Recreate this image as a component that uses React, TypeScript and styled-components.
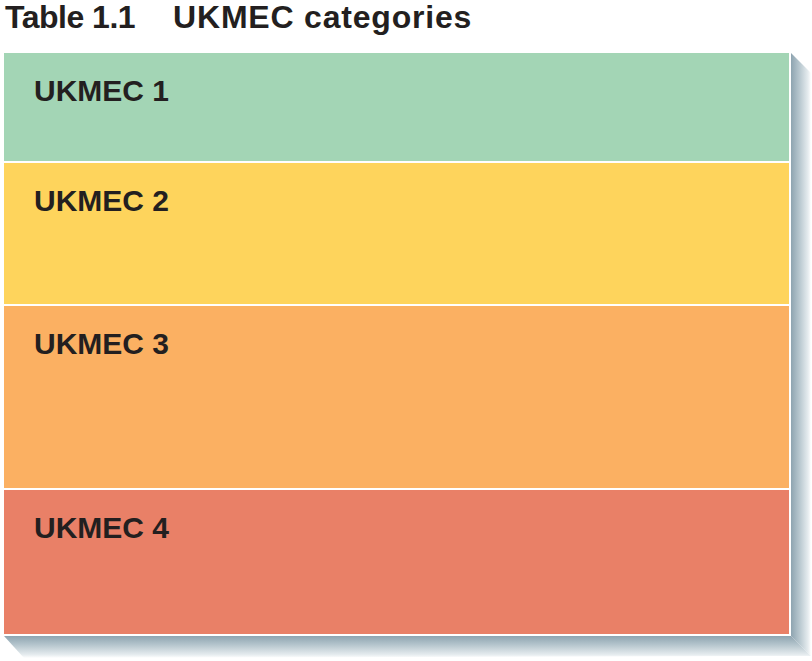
import React from "react";
import styled, { createGlobalStyle } from "styled-components";

const Global = createGlobalStyle`
  html, body { margin: 0; padding: 0; background: #ffffff; }
  body { font-family: "Liberation Sans", Arial, Helvetica, sans-serif; color: #231f20; }
`;

const Page = styled.div`
  width: 812px;
  height: 661px;
  padding: 1px 0 0 5px;
  box-sizing: border-box;
  display: flex;
  flex-direction: column;
  overflow: hidden;
`;

const Title = styled.h1`
  margin: 0;
  font-size: 32px;
  line-height: 32px;
  font-weight: 700;
  display: flex;
  gap: 38px;
  color: #231f20;
`;

const TitlePart = styled.span<{ $ls: number }>`
  letter-spacing: ${(p) => p.$ls}px;
`;

const TableWrap = styled.div`
  position: relative;
  margin: 20px 0 0 -1px;
  width: 785px;
  padding: 0 2px 2px 0;
  background: #ffffff;
  display: flex;
  flex-direction: column;
  gap: 2px;

  &::before,
  &::after {
    content: "";
    position: absolute;
  }
  /* right extrusion */
  &::after {
    top: 0;
    left: 100%;
    width: 20px;
    height: calc(100% + 22px);
    background: linear-gradient(to right, #8ea4b0 0%, #b5c5cd 40%, #e6ecef 85%, #ffffff 100%);
    clip-path: polygon(0 0, 100% 20px, 100% calc(100% - 2px), 0 calc(100% - 22px));
  }
  /* bottom extrusion */
  &::before {
    top: 100%;
    left: 0;
    width: calc(100% + 20px);
    height: 22px;
    background: linear-gradient(to bottom, #8ea4b0 0%, #b5c5cd 40%, #e6ecef 85%, #ffffff 100%);
    clip-path: polygon(0 0, calc(100% - 20px) 0, 100% 20px, 20px 22px);
  }
`;

const Row = styled.div<{ $bg: string; $h: number }>`
  background: ${(p) => p.$bg};
  height: ${(p) => p.$h}px;
  padding: 23px 0 0 30px;
  box-sizing: border-box;
`;

const Label = styled.div`
  font-size: 30px;
  line-height: 30px;
  font-weight: 700;
  color: #231f20;
`;

const rows = [
  { label: "UKMEC 1", bg: "#a3d5b5", h: 108 },
  { label: "UKMEC 2", bg: "#fed45c", h: 141 },
  { label: "UKMEC 3", bg: "#fbb062", h: 182 },
  { label: "UKMEC 4", bg: "#e98067", h: 144 },
];

export default function App() {
  return (
    <>
      <Global />
      <Page>
        <Title>
          <TitlePart $ls={-0.5}>Table 1.1</TitlePart>
          <TitlePart $ls={0.8}>UKMEC categories</TitlePart>
        </Title>
        <TableWrap>
          {rows.map((r) => (
            <Row key={r.label} $bg={r.bg} $h={r.h}>
              <Label>{r.label}</Label>
            </Row>
          ))}
        </TableWrap>
      </Page>
    </>
  );
}
